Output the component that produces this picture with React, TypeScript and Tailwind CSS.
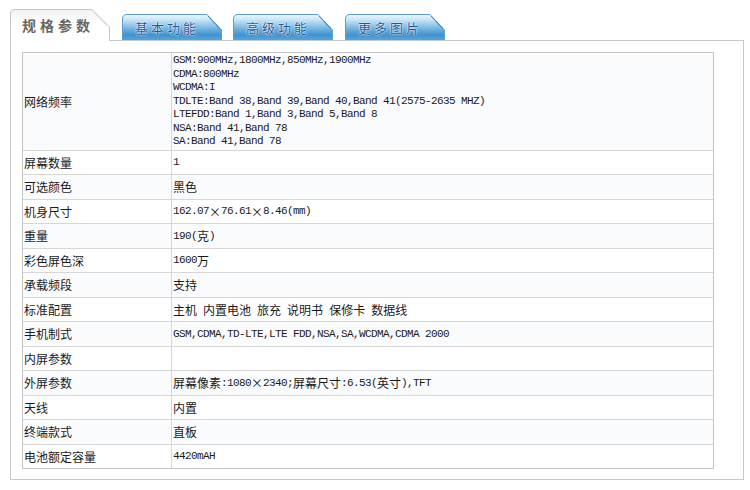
import React from "react";

const mono = "font-['Liberation_Mono',monospace] text-[11px] tracking-[-0.6px] whitespace-pre";
const cjk = "font-['Noto_Sans_CJK_SC',sans-serif] text-[12px] whitespace-pre";

function Mixed({ text }: { text: string }) {
  const parts = text.match(/[\x00-\x7f]+|[^\x00-\x7f]+/g) || [];
  return (
    <>
      {parts.map((p, i) =>
        /^[\x00-\x7f]/.test(p) ? (
          <span key={i} className={mono}>
            {p}
          </span>
        ) : (
          <span key={i} className={cjk}>
            {p}
          </span>
        )
      )}
    </>
  );
}

const freq = [
  "GSM:900MHz,1800MHz,850MHz,1900MHz",
  "CDMA:800MHz",
  "WCDMA:I",
  "TDLTE:Band 38,Band 39,Band 40,Band 41(2575-2635 MHZ)",
  "LTEFDD:Band 1,Band 3,Band 5,Band 8",
  "NSA:Band 41,Band 78",
  "SA:Band 41,Band 78",
];

const rows: [string, string][] = [
  ["屏幕数量", "1"],
  ["可选颜色", "黑色"],
  ["机身尺寸", "162.07×76.61×8.46(mm)"],
  ["重量", "190(克)"],
  ["彩色屏色深", "1600万"],
  ["承载频段", "支持"],
  ["标准配置", "主机 内置电池 旅充 说明书 保修卡 数据线"],
  ["手机制式", "GSM,CDMA,TD-LTE,LTE FDD,NSA,SA,WCDMA,CDMA 2000"],
  ["内屏参数", ""],
  ["外屏参数", "屏幕像素:1080×2340;屏幕尺寸:6.53(英寸),TFT"],
  ["天线", "内置"],
  ["终端款式", "直板"],
  ["电池额定容量", "4420mAH"],
];

function BlueTab({ label, id, ml }: { label: string; id: string; ml: string }) {
  return (
    <div className={`relative w-[100px] h-[26px] ${ml}`}>
      <svg width="100" height="26" viewBox="0 0 100 26" className="absolute inset-0">
        <defs>
          <linearGradient id={id} x1="0" y1="0" x2="0" y2="1">
            <stop offset="0" stopColor="#eef8fe" />
            <stop offset="0.2" stopColor="#c9e5f7" />
            <stop offset="0.5" stopColor="#7fbce6" />
            <stop offset="0.8" stopColor="#3f91cf" />
            <stop offset="1" stopColor="#5aa5da" />
          </linearGradient>
        </defs>
        <path
          d="M0.5 26 V5 Q0.5 0.5 5 0.5 H85 L99.5 16 V26 Z"
          fill={`url(#${id})`}
          stroke="#5d9dcb"
        />
        <path d="M86 2 L98 15" stroke="#3e82b8" strokeWidth="1" fill="none" />
      </svg>
      <div className="relative pl-[13px] pt-[7px] font-['Noto_Sans_CJK_SC',sans-serif] text-[13px] leading-[14px] tracking-[3px] text-[#1d5c98] [text-shadow:0_0_2px_#ffffff,0_0_1px_#ffffff]">
        {label}
      </div>
    </div>
  );
}

export default function App() {
  return (
    <div className="w-[750px] h-[490px] bg-white pl-[10px] pt-[9px]">
      <div className="flex items-end h-[31px]">
        <div className="relative z-10 w-[100px] h-[32px] -mb-px">
          <svg width="100" height="32" viewBox="0 0 100 32" className="absolute inset-0">
            <defs>
              <linearGradient id="act" x1="0" y1="0" x2="0" y2="1">
                <stop offset="0" stopColor="#f3f3f3" />
                <stop offset="0.5" stopColor="#ffffff" />
                <stop offset="1" stopColor="#ffffff" />
              </linearGradient>
            </defs>
            <path d="M0.5 32 V5 Q0.5 0.5 5 0.5 H82 L99.5 18 V32" fill="url(#act)" stroke="#c4c4c4" />
            <path d="M83 2.5 L97 17" stroke="#e2e2e2" fill="none" />
          </svg>
          <div className="relative pl-[12px] pt-[8px] font-['Noto_Sans_CJK_SC',sans-serif] text-[14px] leading-[16px] font-bold tracking-[4px] text-[#666666]">
            规格参数
          </div>
        </div>
        <BlueTab label="基本功能" id="t1" ml="ml-[12px]" />
        <BlueTab label="高级功能" id="t2" ml="ml-[11px]" />
        <BlueTab label="更多图片" id="t3" ml="ml-[12px]" />
      </div>
      <div className="w-[734px] h-[440px] border border-[#c8c8c8] bg-white pl-[11px] pt-[11px]">
        <div className="w-[692px] border border-[#c4c4c4] text-[#1a1a1a]">
          <div className="flex h-[98px] border-b border-[#d6d6d6] bg-[#fafbfd]">
            <div className="w-[149px] border-r border-[#d6d6d6] flex items-center pl-px">
              <span className={cjk}>网络频率</span>
            </div>
            <div className="flex-1 flex flex-col justify-center pl-px">
              {freq.map((l, i) => (
                <div key={i} className="leading-[13.5px] h-[13.5px] flex items-center">
                  <span className={mono}>{l}</span>
                </div>
              ))}
            </div>
          </div>
          {rows.map(([k, v], i) => {
            const last = i === rows.length - 1;
            const h = last ? "h-[23px]" : i % 2 === 0 ? "h-[24px]" : "h-[25px]";
            const bg = i % 2 === 1 ? "bg-[#fafbfd]" : "bg-white";
            const bb = last ? "" : "border-b border-[#d6d6d6]";
            return (
              <div key={k} className={`flex ${h} ${bg} ${bb}`}>
                <div className="w-[149px] border-r border-[#d6d6d6] flex items-center pl-px">
                  <span className={cjk}>{k}</span>
                </div>
                <div className="flex-1 flex items-center pl-px leading-none">
                  <Mixed text={v} />
                </div>
              </div>
            );
          })}
        </div>
      </div>
    </div>
  );
}
